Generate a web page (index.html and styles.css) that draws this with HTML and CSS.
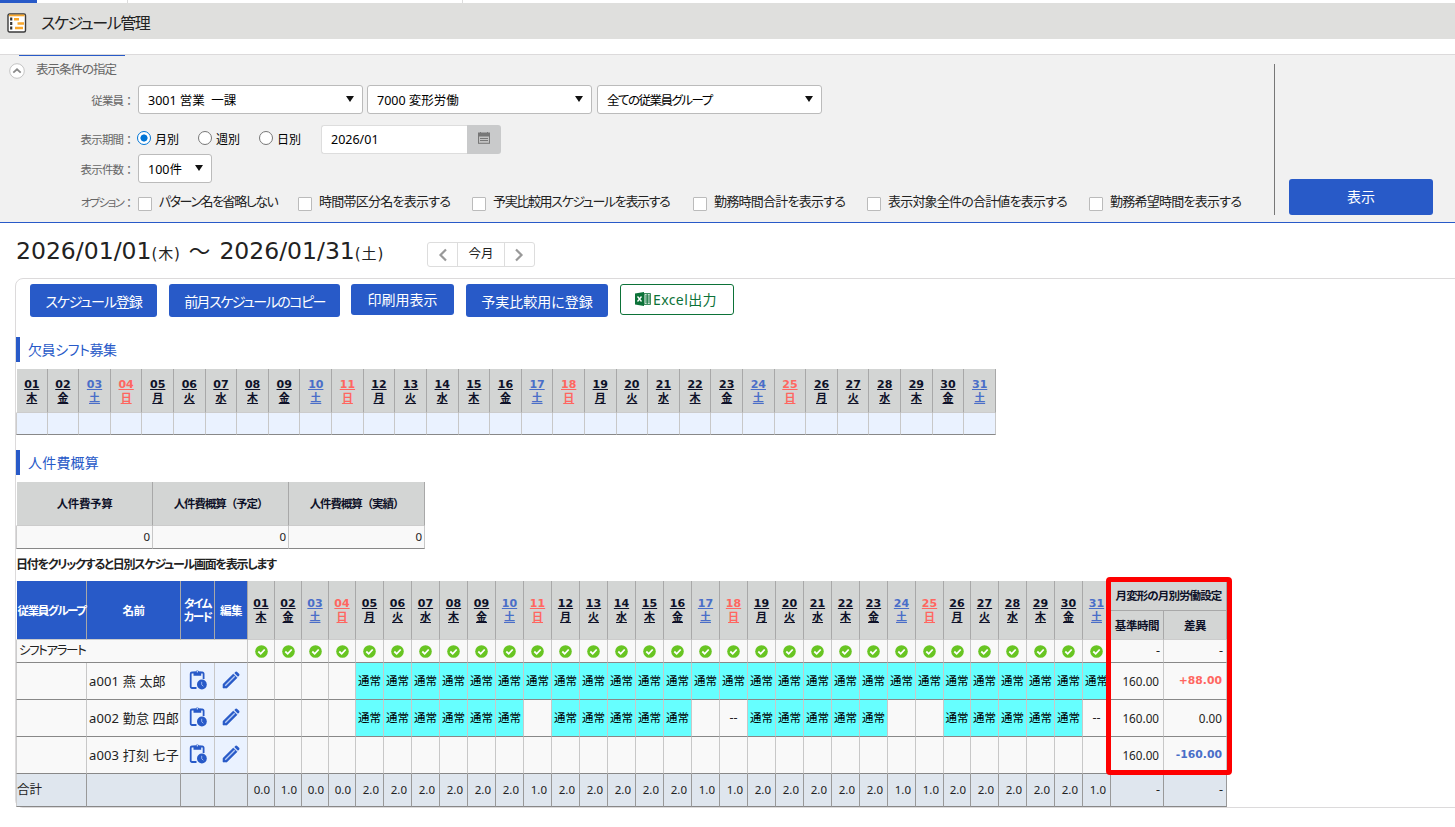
FILE: index.html
```html
<!DOCTYPE html>
<html lang="ja">
<head>
    <meta charset="UTF-8">
    <meta name="viewport" content="width=device-width, initial-scale=1.0">
    <title>スケジュール管理</title>
    <link rel="stylesheet" href="styles.css">
</head>
<body>
    <div class="tab-strip">
        <span class="tab active"></span>
        <span class="tab"></span>
        <span class="tab wide"></span>
    </div>

    <header class="page-header">
        <svg class="page-icon" width="20" height="20" viewBox="0 0 20 20">
            <rect x="1" y="1" width="17.5" height="18" rx="1.5" fill="#fff" stroke="#3b3b3b" stroke-width="1.4"/>
            <rect x="2" y="1.5" width="15.500" height="1.8" fill="#f9a72b"/>
            <path d="M4.200 4.500v3M4.200 9v3M4.200 13.500v3" stroke="#333" stroke-width="2.2"/>
            <path d="M7 6.300h5M10.500 10.500h6.500M8 15h8" stroke="#f9a72b" stroke-width="2.600"/>
        </svg>
        <h1>スケジュール管理</h1>
    </header>

    <section class="filter">
        <div class="filter-main">
            <div class="filter-title">
                <svg width="16" height="16" viewBox="0 0 16 16">
                    <circle cx="8" cy="8" r="7.3" fill="#fff" stroke="#c4c4c4"/>
                    <path d="M4.3 9.7L8 6.3l3.7 3.4" fill="none" stroke="#8a8a8a" stroke-width="1.8"/>
                </svg>
                <span>表示条件の指定</span>
            </div>
            <div class="row row-employee">
                <label>従業員：</label>
                <div class="select"><span>3001 営業&nbsp; 一課</span></div>
                <div class="select"><span>7000 変形労働</span></div>
                <div class="select s-group"><span>全ての従業員グループ</span></div>
            </div>
            <div class="row row-period">
                <label>表示期間：</label>
                <span class="radio checked">月別</span>
                <span class="radio">週別</span>
                <span class="radio last">日別</span>
                <div class="date-input">2026/01</div>
                <div class="date-btn">
                    <svg width="12" height="12" viewBox="0 0 12 12">
                        <path d="M0 1h12v3H0zM2.5 0v2M9.5 0v2" fill="#777" stroke="#777"/>
                        <rect x=".5" y="4" width="11" height="7.3" fill="#c2c2c2" stroke="#777"/>
                        <path d="M2 6.5h8M2 8.5h8" stroke="#777"/>
                    </svg>
                </div>
            </div>
            <div class="row row-count">
                <label>表示件数：</label>
                <div class="select small"><span>100件</span></div>
            </div>
            <div class="row row-option">
                <label><span class="kana">オプション</span>：</label>
                <div class="check c1"><i></i><span>パターン名を省略しない</span></div>
                <div class="check c2"><i></i><span>時間帯区分名を表示する</span></div>
                <div class="check c3"><i></i><span>予実比較用スケジュールを表示する</span></div>
                <div class="check c4"><i></i><span>勤務時間合計を表示する</span></div>
                <div class="check c5"><i></i><span>表示対象全件の合計値を表示する</span></div>
                <div class="check c6"><i></i><span>勤務希望時間を表示する</span></div>
            </div>
        </div>
        <div class="filter-side">
            <button class="btn-show">表示</button>
        </div>
    </section>

    <div class="period">
        <h2>2026/01/01<small>(木)</small><span class="wave">～</span>2026/01/31<small>(土)</small></h2>
        <div class="pager">
            <span><svg width="10" height="14" viewBox="0 0 10 14"><path d="M8 1.5L2.5 7 8 12.5" fill="none" stroke="#999" stroke-width="2.2"/></svg></span>
            <span class="current">今月</span>
            <span><svg width="10" height="14" viewBox="0 0 10 14"><path d="M2 1.5L7.5 7 2 12.5" fill="none" stroke="#999" stroke-width="2.2"/></svg></span>
        </div>
    </div>

    <main class="panel">
        <div class="actions">
            <button class="b1">スケジュール登録</button>
            <button class="b2">前月スケジュールのコピー</button>
            <button class="b3 short">印刷用表示</button>
            <button class="b4">予実比較用に登録</button>
            <button class="excel short">
                <svg width="16" height="14" viewBox="0 0 16 14">
                    <path d="M0 1.5L9 0v14L0 12.5z" fill="#0c7238"/>
                    <rect x="9" y="1.7" width="6.3" height="10.6" fill="#fff" stroke="#0c7238"/>
                    <path d="M10 4h5M10 6h5M10 8h5M10 10h5M12.2 2v10" stroke="#0c7238"/>
                    <path d="M2.5 4.5l4 5M6.5 4.5l-4 5" stroke="#fff" stroke-width="1.3"/>
                </svg><span>Excel出力</span>
            </button>
        </div>

        <h3>欠員シフト募集</h3>
        <table class="grid vacancy">
            <thead><tr id="vacancy-head"></tr></thead>
            <tbody><tr id="vacancy-body"></tr></tbody>
        </table>

        <h3 class="cost-title">人件費概算</h3>
        <table class="grid cost">
            <thead>
                <tr><th class="budget">人件費予算</th><th>人件費概算（予定）</th><th>人件費概算（実績）</th></tr>
            </thead>
            <tbody>
                <tr><td>0</td><td>0</td><td>0</td></tr>
            </tbody>
        </table>

        <p class="note">日付をクリックすると日別スケジュール画面を表示します</p>

        <div class="schedule-wrap">
            <table class="grid schedule">
                <colgroup id="schedule-cols"></colgroup>
                <thead>
                    <tr id="schedule-head">
                        <th class="blue group" rowspan="2">従業員グループ</th>
                        <th class="blue" rowspan="2">名前</th>
                        <th class="blue tc" rowspan="2">タイム<br>カード</th>
                        <th class="blue" rowspan="2">編集</th>
                    </tr>
                    <tr class="sub"><th class="base">基準時間</th><th>差異</th></tr>
                </thead>
                <tbody id="schedule-body"></tbody>
            </table>
            <div class="highlight"></div>
        </div>
    </main>

    <script>
        const week = ['木', '金', '土', '日', '月', '火', '水'];
        const days = [];
        for (let d = 1; d <= 31; d++) {
            days.push({ day: d, label: String(d).padStart(2, '0'), week: week[(d - 1) % 7] });
        }

        // 日付の見出しセル
        function dayHead(d, span) {
            const cls = d.week === '土' ? 'sat' : d.week === '日' ? 'sun' : '';
            return `<th class="day ${cls}"${span ? ' rowspan="2"' : ''}><a>${d.label}<br>${d.week}</a></th>`;
        }

        // 欠員シフト募集
        document.getElementById('vacancy-head').innerHTML = days.map(d => dayHead(d, false)).join('');
        document.getElementById('vacancy-body').innerHTML = days.map(() => '<td></td>').join('');

        // 列幅
        const widths = [71, 94, 34, 33];
        days.forEach(d => widths.push(d.day <= 4 || d.day === 26 ? 27 : 28));
        widths.push(53, 63);
        document.getElementById('schedule-cols').innerHTML = widths.map(w => `<col style="width:${w}px">`).join('');

        document.getElementById('schedule-head').innerHTML +=
            days.map(d => dayHead(d, true)).join('') + '<th class="monthly" colspan="2">月変形の月別労働設定</th>';

        const okIcon = '<svg width="13" height="13" viewBox="0 0 13 13"><circle cx="6.5" cy="6.5" r="6.3" fill="#68c522"/><path d="M3.3 6.5l2.4 2.3 4-4.3" fill="none" stroke="#fff" stroke-width="1.8"/></svg>';
        const cardIcon = '<svg width="18" height="22" viewBox="0 0 18 22"><path d="M7.5 19H3a1.3 1.3 0 0 1-1.300-1.300V4.800A1.300 1.300 0 0 1 3 3.500h10.300a1.300 1.300 0 0 1 1.300 1.300V10" fill="none" stroke="#285ac8" stroke-width="1.800"/><path d="M4.500 2.700h2.100a1.800 1.800 0 0 1 3.400 0h2.200v4H4.500z" fill="#285ac8"/><circle cx="8.300" cy="2.800" r=".7" fill="#eaf2ff"/><circle cx="12.900" cy="15.500" r="4.900" fill="#285ac8"/><path d="M12.700 12.800v3l1.700 1.500" fill="none" stroke="#9bb6ef" stroke-width="1"/></svg>';
        const editIcon = '<svg width="18" height="18" viewBox="0 0 18 18"><path d="M1 17v-3.800L11.300 3l3.800 3.800L4.800 17z" fill="#285ac8" stroke="#285ac8" stroke-width=".6" stroke-linejoin="round"/><path d="M3.200 14.800L12.700 5.300" stroke="#b9cdf5" stroke-width="1.300"/><path d="M12.300 2l1.300-1.200q.8-.6 1.600.1l1.900 1.900q.7.8.1 1.600L16 5.700z" fill="#285ac8"/></svg>';

        const rows = [
            { name: 'a001 燕 太郎', off: [], diff: '+88.00', cls: 'plus' },
            { name: 'a002 勤怠 四郎', off: [11, 17, 18, 24, 25, 31], dash: [18, 31], diff: '0.00', cls: '' },
            { name: 'a003 打刻 七子', off: null, diff: '-160.00', cls: 'minus' }
        ];

        let html = '<tr class="alert"><td class="alert-label" colspan="4">シフトアラート</td>';
        html += days.map(() => `<td class="ok">${okIcon}</td>`).join('');
        html += '<td class="num">-</td><td class="num">-</td></tr>';

        rows.forEach(r => {
            html += `<tr class="member"><td></td><td class="name">${r.name}</td><td class="icon">${cardIcon}</td><td class="icon">${editIcon}</td>`;
            days.forEach(d => {
                if (r.off && d.day >= 5 && !r.off.includes(d.day)) {
                    html += '<td class="shift">通常</td>';
                } else {
                    html += `<td class="empty">${r.dash && r.dash.includes(d.day) ? '--' : ''}</td>`;
                }
            });
            html += `<td class="time">160.00</td><td class="time ${r.cls}">${r.diff}</td></tr>`;
        });

        // 合計行
        const low = [2, 11, 17, 18, 24, 25, 31];
        html += '<tr class="total"><td class="label">合計</td><td></td><td></td><td></td>';
        days.forEach(d => {
            const v = low.includes(d.day) ? '1.0' : d.day < 5 ? '0.0' : '2.0';
            html += `<td class="sum">${v}</td>`;
        });
        html += '<td class="num">-</td><td class="num">-</td></tr>';
        document.getElementById('schedule-body').innerHTML = html;
    </script>
</body>
</html>
```
FILE: styles.css
```css
* {
    margin: 0;
    padding: 0;
    box-sizing: border-box;
}

body {
    font-family: "Noto Sans", "Noto Sans CJK JP", sans-serif;
    font-feature-settings: "palt";
    font-size: 12.5px;
    line-height: 16px;
    color: #222;
    background: #fff;
    height: 827px;
    overflow: hidden;
    white-space: nowrap;
}

button {
    font-family: inherit;
    font-feature-settings: inherit;
    border: none;
}

/* 上部 */
.tab-strip {
    display: flex;
    height: 3px;
}

.tab {
    width: 91px;
    border-right: 1px solid #ddd;
}

.tab.active {
    width: 37px;
    background: #285ac8;
    border: none;
}

.tab.wide {
    width: 335px;
}

.page-header {
    display: flex;
    align-items: center;
    height: 36px;
    padding: 4px 0 0 7px;
    background: #dfdfdd;
}

.page-header h1 {
    margin-left: 14px;
    font-size: 16px;
    font-weight: normal;
    line-height: 24px;
    letter-spacing: -1.5px;
}

/* 表示条件 */
.filter {
    display: flex;
    height: 169px;
    margin-top: 15px;
    background: #f1f1f1;
    border-top: 1px solid #dcdadb;
    border-bottom: 1px solid #285ac8;
}

.filter-main {
    width: 1274px;
}

.filter-main::before {
    content: '';
    display: block;
    width: 106px;
    height: 1px;
    margin-left: 19px;
    background: #285ac8;
}

.filter-title {
    display: flex;
    height: 29px;
    padding: 7px 0 0 9px;
    color: #666;
}

.filter-title svg {
    margin-right: 11px;
}

.filter-title span {
    margin-top: -1px;
    letter-spacing: -1px;
}

.row {
    display: flex;
    align-items: center;
}

.row label {
    width: 138px;
    padding: 2px 4px 0 0;
    font-size: 11.5px;
    font-feature-settings: normal;
    letter-spacing: -0.8px;
    color: #666;
    text-align: right;
}

.row .kana {
    font-feature-settings: "palt";
    letter-spacing: -1.6px;
}

.row-employee {
    height: 29px;
}

.row-period {
    height: 29px;
    margin-top: 11px;
}

.row-period label {
    padding-top: 0;
}

.row-count {
    height: 29px;
}

.row-option {
    height: 36px;
    padding-top: 4px;
}

.row-option label {
    padding-top: 0;
    margin-top: -1px;
}

.select {
    display: flex;
    align-items: center;
    justify-content: space-between;
    width: 225px;
    height: 29px;
    margin-right: 4px;
    padding: 2px 8px 0 9px;
    color: #000;
    background: #fff;
    border: 1px solid #bbb;
    border-radius: 3px;
}

.select::after {
    content: '';
    margin-top: -4px;
    border: 4px solid transparent;
    border-top: 6px solid #111;
    border-bottom: none;
}

.select.s-group {
    margin-left: 1px;
    letter-spacing: -1.5px;
}

.select.small {
    width: 74px;
}

.radio {
    display: flex;
    align-items: center;
    width: 61px;
    font-size: 12px;
    color: #000;
}

.radio::before {
    content: '';
    width: 12px;
    height: 12px;
    margin: -4px 4px 0 -1px;
    background: #fff;
    border: 1px solid #777;
    border-radius: 50%;
}

.radio.checked::before {
    background: radial-gradient(#0075d6 0 3.2px, #fff 3.9px);
    border-color: #0075d6;
}

.date-input {
    width: 146px;
    height: 29px;
    padding: 6px 9px;
    color: #000;
    background: #fff;
    border: 1px solid #ddd;
    border-right: none;
    border-radius: 3px 0 0 3px;
}

.date-btn {
    width: 34px;
    height: 29px;
    padding: 7px 0 0 11px;
    background: #c9cacb;
    border-radius: 0 3px 3px 0;
}

.check {
    display: flex;
    align-items: center;
    width: 160px;
    font-size: 13px;
    letter-spacing: -0.75px;
}

.check i {
    width: 14px;
    height: 14px;
    margin: 2px 7px 0 0;
    background: #fff;
    border: 1px solid #bbb;
    border-radius: 1px;
}

.check span {
    margin-top: -4px;
}

.c1 { letter-spacing: -1.45px; }
.c2 { width: 174px; }
.c3 { width: 221px; letter-spacing: -1.35px; }
.c4 { width: 174px; }
.c5 { width: 222px; letter-spacing: -0.8px; }

.filter-side {
    align-self: flex-start;
    width: 181px;
    height: 151px;
    margin-top: 9px;
    padding: 115px 0 0 14px;
    border-left: 1px solid #777;
}

.btn-show {
    width: 144px;
    height: 36px;
    padding-bottom: 3px;
    font-size: 14px;
    color: #fff;
    background: #285ac8;
    border-radius: 3px;
}

/* 期間 */
.period {
    display: flex;
    height: 55px;
    padding: 19px 0 0 16px;
}

.period h2 {
    width: 411px;
    margin-top: -1px;
    font-family: "DejaVu Sans", "Noto Sans CJK JP", sans-serif;
    font-size: 23.5px;
    font-weight: normal;
    line-height: 20px;
}

.period small {
    font-size: 15px;
    letter-spacing: 0.9px;
}

.wave {
    margin: 0 9px 0 8px;
    font-size: 21.5px;
}

.pager {
    display: flex;
    width: 108px;
    height: 25px;
    border: 1px solid #ddd;
    border-radius: 3px;
}

.pager span {
    width: 30px;
    padding-top: 5px;
    text-align: center;
}

.pager .current {
    width: 48px;
    padding-top: 3px;
    border: solid #ddd;
    border-width: 0 1px;
}

/* 本体 */
.panel {
    width: 1460px;
    height: 530px;
    margin-left: 15px;
    border: 1px solid #dcdadb;
    border-radius: 8px;
}

.actions {
    display: flex;
    align-items: flex-start;
    height: 58px;
    padding: 5px 0 0 14px;
}

.actions button {
    height: 33px;
    font-size: 14px;
    color: #fff;
    background: #285ac8;
    border-radius: 3px;
}

.actions button.short {
    height: 31px;
    padding-bottom: 2px;
}

.actions .b1 { width: 127px; letter-spacing: -1.1px; }
.actions .b2 { width: 171px; margin-left: 12px; letter-spacing: -1.5px; }
.actions .b3 { width: 103px; margin-left: 11px; }
.actions .b4 { width: 142px; margin-left: 12px; }

.actions .excel {
    display: flex;
    align-items: center;
    width: 114px;
    margin-left: 12px;
    padding-left: 14px;
    letter-spacing: 0.4px;
    color: #0c7238;
    background: #fff;
    border: 1px solid #0c7238;
}

.excel span {
    margin-left: 2px;
}

h3 {
    height: 25px;
    padding-left: 8px;
    font-size: 14px;
    font-weight: normal;
    line-height: 25px;
    letter-spacing: -0.4px;
    color: #285ac8;
    border-left: 4px solid #285ac8;
}

.grid {
    table-layout: fixed;
    border-collapse: separate;
    border-spacing: 0;
}

.grid th {
    font-size: 11.5px;
    line-height: 13px;
    letter-spacing: -0.4px;
    color: #0e1128;
    background: #d3d5d4;
    border-right: 1px solid #a8a8a8;
    border-bottom: 1px solid #ccc;
}

.grid td {
    background: #f9f9f9;
    border-right: 1px solid #c8c8c8;
    border-bottom: 1px solid #888;
}

.grid tr > :first-child {
    border-left: 1px solid #ccc;
}

.grid thead tr > :first-child {
    border-left-color: #fff;
}

.day a {
    font-family: "DejaVu Sans", "Noto Sans CJK JP", sans-serif;
    font-size: 11px;
    letter-spacing: 0;
    text-decoration: underline;
}

.grid .sat {
    color: #4a6ec8;
}

.grid .sun {
    color: #ff6660;
}

.vacancy {
    width: 980px;
    margin-top: 7px;
}

.vacancy th {
    height: 44px;
}

.vacancy td {
    height: 22px;
    background: #eaf2ff;
}

.cost-title {
    margin-top: 15px;
    letter-spacing: 0.2px;
}

.cost {
    width: 409px;
    margin-top: 7px;
}

.cost th {
    height: 44px;
    padding-bottom: 1px;
    font-feature-settings: normal;
    letter-spacing: -1.1px;
}

.cost .budget {
    width: 137px;
    letter-spacing: -0.4px;
}

.cost td {
    height: 23px;
    padding-right: 2px;
    font-size: 11.5px;
    text-align: right;
}

.note {
    height: 32px;
    padding: 8px 0 0 0;
    font-size: 12px;
    font-weight: bold;
    letter-spacing: -1.25px;
}

/* スケジュール表 */
.schedule-wrap {
    position: relative;
    width: 1211px;
}

.schedule {
    width: 1211px;
}

.schedule .blue {
    color: #fff;
    background: #285ac8;
}

.schedule .group {
    letter-spacing: -1.4px;
}

.schedule .tc {
    letter-spacing: -1.5px;
}

.schedule thead tr {
    height: 30px;
}

.schedule thead .sub {
    height: 29px;
}

.schedule .sub th {
    border-left: none;
}

.schedule .monthly {
    letter-spacing: -0.9px;
    border-bottom-color: #a8a8a8;
}

.alert td {
    height: 23px;
    padding-left: 2px;
}

.alert-label {
    letter-spacing: -1.4px;
}

.schedule .ok {
    padding: 0;
    text-align: center;
}

.ok svg,
.icon svg {
    display: block;
    margin: 0 auto;
}

.alert .num,
.total .num {
    padding-right: 3px;
    text-align: right;
}

.member td {
    height: 37px;
    padding-bottom: 1px;
}

.member .name {
    padding-left: 2px;
    font-size: 13px;
    letter-spacing: 0.15px;
}

.member .icon {
    padding-bottom: 3px;
    background: #eaf2ff;
}

.member .shift {
    font-size: 11.5px;
    color: #000;
    text-align: center;
    background: #66ffff;
}

.member .empty {
    text-align: center;
}

.member .time {
    padding-right: 4px;
    font-size: 11.7px;
    text-align: right;
}

.member .plus,
.member .minus {
    font-family: "DejaVu Sans", sans-serif;
    font-size: 10.8px;
    font-weight: bold;
    color: #ff6660;
}

.member .minus {
    color: #4a6ec8;
}

.total td {
    height: 33px;
    background: #dfe6ee;
    border-right-color: #999;
}

.total .sum {
    padding-right: 4px;
    font-size: 11.5px;
    text-align: right;
}

/* 月別労働設定の強調枠 */
.highlight {
    position: absolute;
    top: -4px;
    left: 1090px;
    width: 126px;
    height: 198px;
    border: 5px solid #fe0000;
    border-radius: 4px;
}
```
